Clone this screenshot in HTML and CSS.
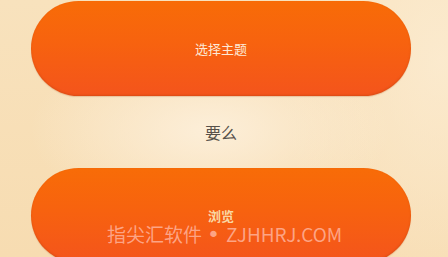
FILE: index.html
```html
<!DOCTYPE html>
<html lang="zh">
<head>
<meta charset="utf-8">
<link rel="stylesheet" href="styles.css">
</head>
<body>
<div class="page">
  <div class="btn"><span class="label">选择主题</span></div>
  <div class="or">要么</div>
  <div class="btn"><span class="label label-alt">浏览</span></div>
  <div class="watermark">指尖汇软件<span class="dot">•</span>ZJHHRJ.COM</div>
</div>
</body>
</html>
```
FILE: styles.css
```css
html, body {
  margin: 0;
  padding: 0;
  width: 448px;
  height: 257px;
  overflow: hidden;
}
body {
  font-family: "Noto Sans CJK SC", "Noto Sans", sans-serif;
  background:
    radial-gradient(ellipse 180px 90px at 210px 130px, rgba(253, 240, 220, 0.9), rgba(253, 240, 220, 0) 100%),
    radial-gradient(ellipse 160px 260px at 440px 60px, rgba(252, 236, 210, 0.8), rgba(252, 236, 210, 0) 100%),
    linear-gradient(180deg, #f8e2bd 0%, #f7dcb1 100%);
}
.page {
  position: relative;
  width: 448px;
  height: 257px;
  padding: 1px 0 0 31px;
  box-sizing: border-box;
  display: flex;
  flex-direction: column;
  align-items: flex-start;
}
.btn {
  width: 380px;
  height: 95px;
  flex: none;
  border-radius: 48px;
  background: linear-gradient(180deg, #f86c07 0%, #f7620f 45%, #f4541c 100%);
  box-shadow: inset 0 -1px 2px rgba(170, 60, 10, 0.35), 0 1px 1px rgba(180, 90, 40, 0.25);
  display: flex;
  align-items: center;
  justify-content: center;
}
.label {
  color: #fde9d6;
  font-size: 13px;
  line-height: 16px;
}
.label-alt {
  color: #f9d7a4;
  font-weight: 700;
}
.or {
  width: 380px;
  height: 72px;
  flex: none;
  display: flex;
  align-items: center;
  justify-content: center;
  font-size: 16px;
  color: #57514a;
}
.watermark {
  position: absolute;
  left: 107px;
  top: 221px;
  font-size: 19px;
  line-height: 26px;
  color: rgba(255, 185, 165, 0.78);
  white-space: nowrap;
}
.dot {
  font-family: "DejaVu Sans", sans-serif;
  font-size: 22px;
  line-height: 20px;
  margin: 0 6px 0 5px;
}
```
